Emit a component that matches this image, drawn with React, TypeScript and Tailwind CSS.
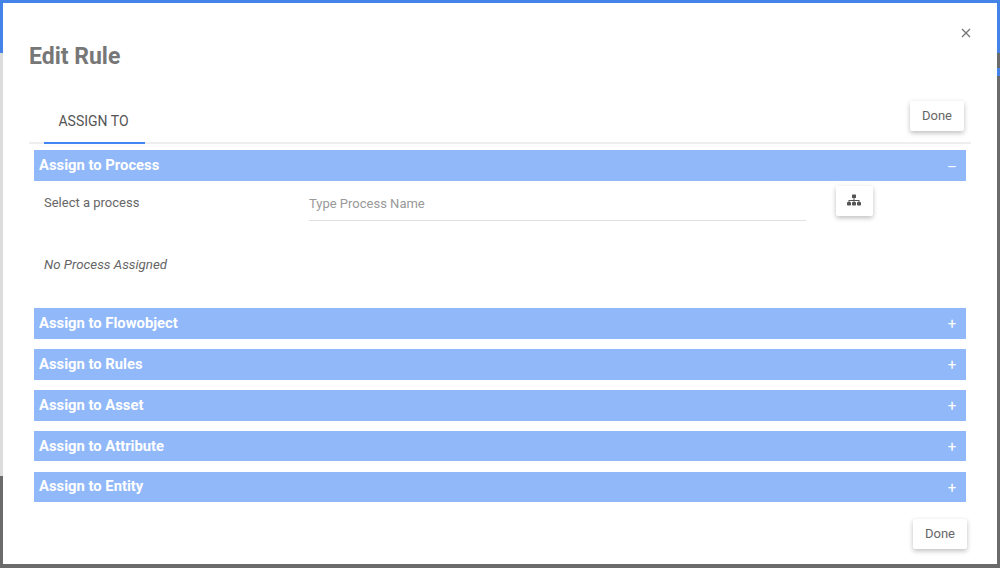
import React from "react";

function Header({ title, open, last }: { title: string; open?: boolean; last?: boolean }) {
  return (
    <div className="h-[30.800px] bg-[#91b8f9] flex items-center justify-between pl-[5px] pr-[9px] text-white">
      <span className={open || last ? "text-[14.800px] font-bold leading-none pb-[1px]" : "text-[14.800px] font-bold leading-none pt-[1px]"}>{title}</span>
      <span className={open ? "text-[15px] leading-none w-[10px] text-center pt-[4px]" : "text-[15px] leading-none w-[10px] text-center pt-[3px]"}>{open ? "–" : "+"}</span>
    </div>
  );
}

function DoneButton() {
  return (
    <button className="w-[54px] h-[30px] bg-white rounded-[2px] text-[13px] text-[#666] shadow-[0_2px_5px_rgba(0,0,0,0.26)]">
      Done
    </button>
  );
}

export default function App() {
  return (
    <div className="relative w-[1000px] h-[568px] overflow-hidden bg-[#6b6b6b] font-['Roboto',sans-serif]">
      <div className="absolute left-0 top-0 w-full h-[53px] bg-[#4583e8]" />
      <div className="absolute left-0 top-[53px] w-[3px] h-[423px] bg-[#dcdcdc]" />
      <div className="absolute right-0 top-[68px] w-[3px] h-[8px] bg-[#4583e8]" />
      <div className="absolute left-[3px] top-[3px] w-[994px] h-[561px] bg-white flex flex-col pl-[26px] pr-[26px]">
        <div className="h-[97px] pt-[41px] text-[23px] font-bold leading-[26px] text-[#777777]">Edit Rule</div>
        <div className="absolute right-[26px] top-[25px] text-[#757575]">
          <svg width="10" height="10" viewBox="0 0 10 10" fill="none" stroke="currentColor" strokeWidth="1.3">
            <path d="M1 1l8 8M9 1l-8 8" />
          </svg>
        </div>
        <div className="h-[44px] border-b-2 border-[#eeeeee] flex items-start justify-between relative">
          <div className="ml-[15px] w-[101px] h-[44px] pr-[2px] text-center text-[14px] leading-[42px] text-[#555] border-b-2 border-[#4285f4]">
            ASSIGN TO
          </div>
          <div className="mr-[7px] mt-[1px]"><DoneButton /></div>
        </div>
        <div className="pl-[5px] pr-[5px] pt-[6px] flex flex-col">
          <Header title="Assign to Process" open />
          <div className="h-[127.200px]">
            <div className="flex items-start h-[60px]">
              <div className="w-[275px] pl-[10px] pt-[14px] text-[13px] leading-[15px] text-[#666]">Select a process</div>
              <div className="w-[497px] h-[40px] border-b border-[#e0e0e0] pt-[15px] text-[13px] leading-[15px] text-[#999]">
                Type Process Name
              </div>
              <div className="ml-[30px] mt-[5px] w-[37px] h-[30px] bg-white rounded-[2px] shadow-[0_2px_5px_rgba(0,0,0,0.26)] flex items-center justify-center text-[#555]">
                <svg width="14" height="12" viewBox="0 0 14 12" fill="currentColor" className="mt-[-1px] ml-[-1px]">
                  <rect x="5" y="0.500" width="4" height="3.500" rx="0.600" />
                  <path d="M6.500 4h1v2H12.500v2h-1V7H7.500v1h-1V7H2.500v1h-1V6h5z" />
                  <rect x="0" y="8" width="4" height="3.500" rx="0.800" />
                  <rect x="5" y="8" width="4" height="3.500" rx="0.800" />
                  <rect x="10" y="8" width="4" height="3.500" rx="0.800" />
                </svg>
              </div>
            </div>
            <div className="pl-[10px] pt-[17px] text-[13.300px] leading-[14px] italic text-[#666]">No Process Assigned</div>
          </div>
          <div className="flex flex-col gap-[10.100px]">
            <Header title="Assign to Flowobject" />
            <Header title="Assign to Rules" />
            <Header title="Assign to Asset" />
            <Header title="Assign to Attribute" />
            <Header title="Assign to Entity" last />
          </div>
          <div className="flex justify-end mt-[16.600px] mr-[-1px]"><DoneButton /></div>
        </div>
      </div>
    </div>
  );
}
